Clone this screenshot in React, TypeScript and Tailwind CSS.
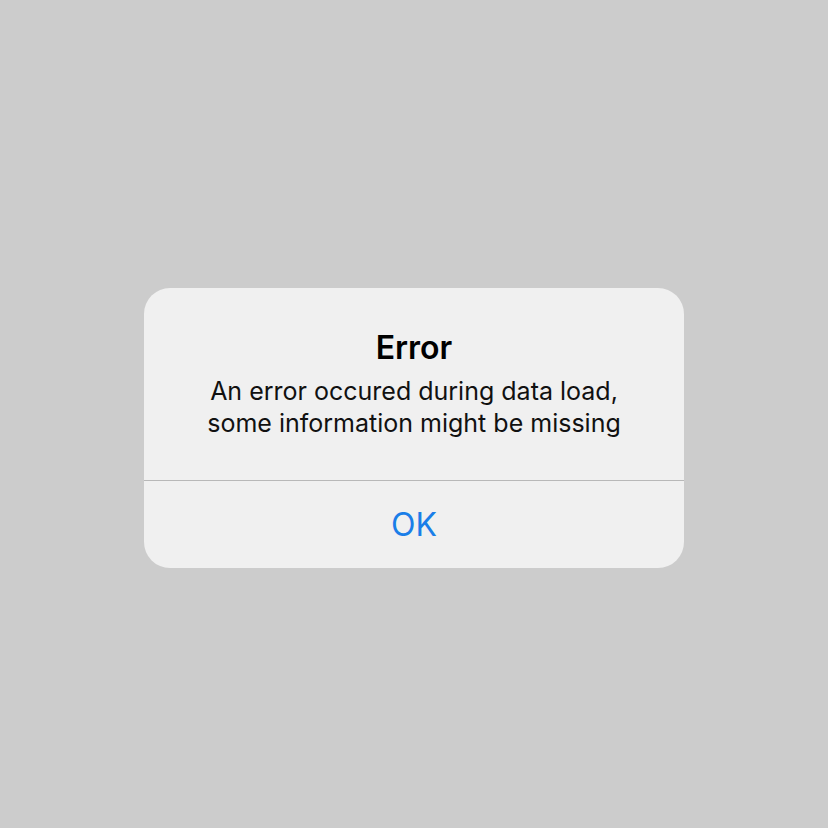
const App = () => {
  return (
    <div
      className="w-[828px] h-[828px] bg-[#cccccc] flex items-center justify-center"
      style={{ fontFamily: "Inter, 'Noto Sans', sans-serif" }}
    >
      <div className="w-[540px] mt-[28px] rounded-[26px] bg-[#f0f0f0] flex flex-col overflow-hidden">
        <div className="flex flex-col items-center pt-[40px] pb-[41px] px-4 text-center">
          <h2 className="text-[32px] leading-[40px] font-semibold text-black">Error</h2>
          <p className="mt-[7px] text-[25px] leading-[32px] text-[#111111]">
            An error occured during data load,
            <br />
            some information might be missing
          </p>
        </div>
        <div className="h-px bg-[#b8b8b8]" />
        <button className="h-[87px] text-[32px] text-[#1a7ee8] flex items-center justify-center">
          OK
        </button>
      </div>
    </div>
  );
};

export default App;
